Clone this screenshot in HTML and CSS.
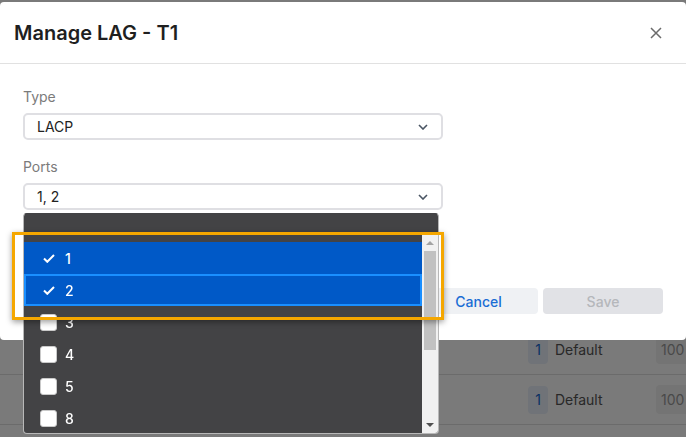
FILE: index.html
```html
<!DOCTYPE html>
<html lang="en">
  <head>
    <meta charset="UTF-8" />
    <meta name="viewport" content="width=device-width, initial-scale=1.0" />
    <title>Manage LAG - T1</title>
    <link rel="stylesheet" href="styles.css">
  </head>
  <body>
    <div class="page">
      <div class="row">
        <span class="vlan">1</span>
        <span class="name">Default</span>
        <span class="mtu">100</span>
      </div>
      <div class="row">
        <span class="vlan">1</span>
        <span class="name">Default</span>
        <span class="mtu">100</span>
      </div>
    </div>

    <div class="overlay"></div>

    <div class="modal">
      <div class="modal-header">
        <h2>Manage LAG - T1</h2>
        <button class="close" aria-label="Close">
          <svg width="12" height="12" viewBox="0 0 12 12">
            <path d="M1 1 L11 11 M11 1 L1 11" stroke="#6b6b6b" stroke-width="1.5" fill="none" />
          </svg>
        </button>
      </div>

      <div class="modal-body">
        <div class="field">
          <label>Type</label>
          <div class="select">
            <span>LACP</span>
            <svg class="chevron" width="10" height="6" viewBox="0 0 10 6">
              <path d="M1 1 L5 5 L9 1" stroke="#4a5563" stroke-width="1.6" fill="none" />
            </svg>
          </div>
        </div>

        <div class="field ports">
          <label>Ports</label>
          <div class="select">
            <span>1, 2</span>
            <svg class="chevron" width="10" height="6" viewBox="0 0 10 6">
              <path d="M1 1 L5 5 L9 1" stroke="#4a5563" stroke-width="1.6" fill="none" />
            </svg>
          </div>

          <div class="dropdown">
            <div class="dropdown-head"></div>
            <div class="dropdown-list">
              <ul class="options">
                <li class="selected">
                  <span class="mark">
                    <svg width="12" height="9" viewBox="0 0 12 9">
                      <path d="M1 4.5 L4.3 7.8 L11 1" stroke="#fff" stroke-width="2" fill="none" />
                    </svg>
                  </span>
                  1
                </li>
                <li class="selected focused">
                  <span class="mark">
                    <svg width="12" height="9" viewBox="0 0 12 9">
                      <path d="M1 4.5 L4.3 7.8 L11 1" stroke="#fff" stroke-width="2" fill="none" />
                    </svg>
                  </span>
                  2
                </li>
                <li><span class="mark box"></span>3</li>
                <li><span class="mark box"></span>4</li>
                <li><span class="mark box"></span>5</li>
                <li><span class="mark box"></span>8</li>
              </ul>
              <div class="scrollbar">
                <div class="arrow"><span class="up"></span></div>
                <div class="thumb"></div>
                <div class="track"></div>
                <div class="arrow"><span class="down"></span></div>
              </div>
            </div>
          </div>
        </div>
      </div>

      <div class="modal-footer">
        <button class="btn cancel">Cancel</button>
        <button class="btn save" disabled>Save</button>
      </div>
    </div>

    <div class="highlight"></div>
  </body>
</html>
```

FILE: styles.css
```css
* {
  box-sizing: border-box;
}

body {
  margin: 0;
  height: 437px;
  overflow: hidden;
  font-family: Inter, "Noto Sans", sans-serif;
  background-color: #fff;
  color: #222;
}

/* page behind the modal */
.page {
  padding-top: 325px;
}

.row {
  display: flex;
  align-items: center;
  gap: 7px;
  height: 50px;
  padding-left: 528px;
  border-bottom: 1px solid #e0e0e0;
  font-size: 14px;
}

.row > span {
  flex-shrink: 0;
}

.vlan {
  display: flex;
  align-items: center;
  justify-content: center;
  width: 20px;
  height: 28px;
  border-radius: 4px;
  background-color: #eaf1fa;
  color: #1565d0;
}

.name {
  width: 94px;
  color: #555;
}

.mtu {
  padding: 6px 5px;
  border-radius: 4px;
  background-color: #f3f3f3;
  color: #9a9a9a;
}

.overlay {
  position: fixed;
  inset: 0;
  background-color: rgba(0, 0, 0, 0.52);
}

/* modal */
.modal {
  position: absolute;
  top: 2px;
  left: 0;
  right: 0;
  background-color: #fff;
  border-radius: 4px;
}

.modal-header {
  display: flex;
  align-items: center;
  justify-content: space-between;
  height: 62px;
  padding: 0 24px 0 14px;
  border-bottom: 1px solid #e1e1e1;
}

.modal-header h2 {
  margin: 0;
  font-size: 20px;
  font-weight: 600;
  color: #1f1f1f;
}

.close {
  display: flex;
  padding: 0;
  border: none;
  background: none;
}

.modal-body {
  padding: 23px 23px 0;
}

.field + .field {
  margin-top: 17px;
}

.field label {
  display: block;
  margin-bottom: 6px;
  font-size: 14px;
  line-height: 20px;
  color: #7b7b7b;
}

.select {
  display: flex;
  align-items: center;
  justify-content: space-between;
  width: 420px;
  height: 27px;
  padding: 0 13px 0 12px;
  border: 2px solid #dfdfe3;
  border-radius: 5px;
  font-size: 14px;
  color: #222;
}

.ports {
  position: relative;
}

/* open ports list */
.dropdown {
  position: absolute;
  top: calc(100% + 3px);
  left: 0;
  z-index: 2;
  display: flex;
  flex-direction: column;
  width: 416px;
  height: 221px;
  border: 1px solid #b8b8b8;
  border-top-color: #434345;
  border-radius: 4px;
  background-color: #434345;
  overflow: hidden;
}

.dropdown-head {
  height: 20px;
}

.dropdown-list {
  display: flex;
  flex: 1;
  min-height: 0;
}

.options {
  flex: 1;
  margin: 0;
  padding: 8px 0 0;
  list-style: none;
  overflow: hidden;
}

.options li {
  display: flex;
  align-items: center;
  gap: 8px;
  height: 32px;
  padding-left: 16px;
  font-size: 14px;
  font-weight: 500;
  color: #fff;
}

.options li.selected {
  background-color: #0059c7;
}

.options li.focused {
  box-shadow: inset 0 0 0 2px #1a8fff;
}

.mark {
  display: flex;
  align-items: center;
  justify-content: center;
  width: 17px;
  height: 17px;
}

.mark.box {
  border: 1px solid #c9c9c9;
  border-radius: 3px;
  background-color: #fff;
}

.scrollbar {
  display: flex;
  flex-direction: column;
  width: 16px;
  background-color: #f1f1f1;
}

.arrow {
  display: flex;
  align-items: center;
  justify-content: center;
  height: 17px;
}

.up {
  border-left: 4px solid transparent;
  border-right: 4px solid transparent;
  border-bottom: 4px solid #a3a3a3;
}

.down {
  border-left: 4px solid transparent;
  border-right: 4px solid transparent;
  border-top: 4px solid #505050;
}

.thumb {
  height: 99px;
  margin: 0 2px;
  background-color: #c1c1c1;
}

.track {
  flex: 1;
}

.modal-footer {
  display: flex;
  justify-content: flex-end;
  gap: 5px;
  padding: 78px 23px 26px;
}

.btn {
  height: 26px;
  border: none;
  border-radius: 4px;
  font-family: inherit;
  font-size: 14px;
  font-weight: 500;
}

.btn.cancel {
  width: 119px;
  background-color: #eff1f4;
  color: #1a6dd4;
}

.btn.save {
  width: 120px;
  background-color: #e1e2e6;
  color: #b5b7bb;
}

/* annotation frame around the selected ports */
.highlight {
  position: absolute;
  top: 232px;
  left: 12px;
  z-index: 3;
  width: 432px;
  height: 88px;
  border: 3px solid #f5a700;
  box-shadow: 0 2px 6px rgba(0, 0, 0, 0.4);
  pointer-events: none;
}
```
